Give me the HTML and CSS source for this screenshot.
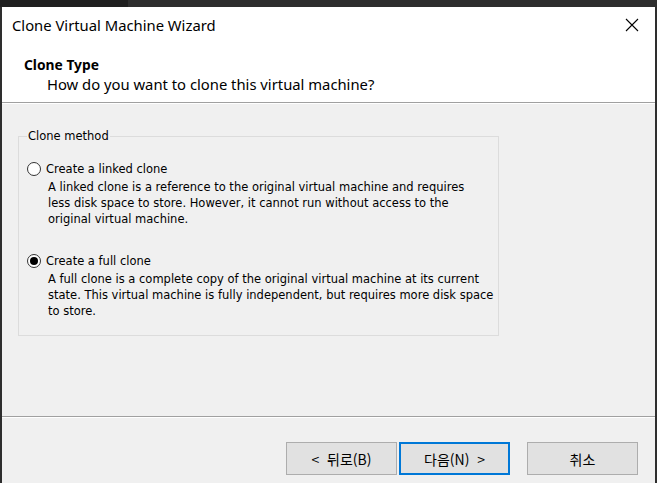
FILE: index.html
```html
<!DOCTYPE html>
<html lang="ko">
<head>
    <meta charset="UTF-8">
    <meta name="viewport" content="width=device-width, initial-scale=1.0">
    <title>Clone Virtual Machine Wizard</title>
    <link rel="stylesheet" href="styles.css">
</head>
<body>
    <div class="titlebar-strip">
        <div class="strip-dark"></div>
    </div>
    <div class="window">
        <div class="header">
            <div class="title-row">
                <span class="title">Clone Virtual Machine Wizard</span>
                <svg class="close" width="14" height="14" viewBox="0 0 14 14">
                    <path d="M1 1 L13 13 M13 1 L1 13" stroke="#000" stroke-width="1.1" fill="none"/>
                </svg>
            </div>
            <div class="page-title">Clone Type</div>
            <div class="page-subtitle">How do you want to clone this virtual machine?</div>
        </div>

        <div class="content">
            <fieldset class="group">
                <legend>Clone method</legend>
                <div class="option">
                    <div class="option-head">
                        <span class="radio"></span>
                        <span>Create a linked clone</span>
                    </div>
                    <p class="option-desc">A linked clone is a reference to the original virtual machine and requires<br>less disk space to store. However, it cannot run without access to the<br>original virtual machine.</p>
                </div>
                <div class="option">
                    <div class="option-head">
                        <span class="radio checked"></span>
                        <span>Create a full clone</span>
                    </div>
                    <p class="option-desc">A full clone is a complete copy of the original virtual machine at its current<br>state. This virtual machine is fully independent, but requires more disk space<br>to store.</p>
                </div>
            </fieldset>
        </div>

        <div class="footer">
            <button class="btn">&lt;&nbsp; 뒤로(B)</button>
            <button class="btn btn-default">다음(N)&nbsp; &gt;</button>
            <button class="btn btn-cancel">취소</button>
        </div>
    </div>
</body>
</html>
```

FILE: styles.css
```css
* {
    box-sizing: border-box;
}

html, body {
    margin: 0;
    padding: 0;
    height: 100%;
}

body {
    background: #2e2e2e;
    display: flex;
    flex-direction: column;
    overflow: hidden;
}

.titlebar-strip {
    height: 7px;
    flex: none;
}

.strip-dark {
    width: 128px;
    height: 7px;
    background: #1f1f1f;
}

.window {
    flex: 1;
    margin: 0 2px 0 2px;
    background: #f0f0f0;
    display: flex;
    flex-direction: column;
}

.header {
    background: #fff;
    height: 96px;
    border-bottom: 1px solid #a0a0a0;
    font-family: "Noto Sans", "Open Sans", sans-serif;
    color: #000;
}

.title-row {
    height: 36px;
    display: flex;
    align-items: center;
    justify-content: space-between;
    padding: 0 16px 0 10px;
}

.title {
    font-size: 14.8px;
    margin-top: -1px;
}

.close {
    margin-top: -1px;
}

.page-title {
    font-weight: bold;
    font-size: 13.8px;
    padding-left: 22px;
    line-height: 18px;
    margin-top: 13px;
}

.page-subtitle {
    font-size: 14.8px;
    padding-left: 45px;
    line-height: 20px;
    margin-top: 0;
}

.content {
    height: 314px;
    border-top: 1px solid #fff;
    border-bottom: 1px solid #a0a0a0;
    padding: 25px 0 0 16px;
}

.group {
    width: 481px;
    height: 207px;
    margin: 0;
    padding: 17px 0 0 8px;
    border: 1px solid #dcdcdc;
    font-family: "DejaVu Sans", sans-serif;
    font-size: 11.5px;
    color: #000;
}

.group legend {
    padding: 0 1px;
    margin-left: 0;
}

.option {
    margin-bottom: 25px;
}

.option-head {
    display: flex;
    align-items: center;
    gap: 5px;
    height: 18px;
}

.radio {
    width: 14px;
    height: 14px;
    border: 1px solid #333;
    border-radius: 50%;
    background: #fff;
    display: inline-block;
    position: relative;
}

.radio.checked::after {
    content: "";
    position: absolute;
    left: 2px;
    top: 2px;
    width: 8px;
    height: 8px;
    border-radius: 50%;
    background: #000;
}

.option-desc {
    margin: 1px 0 0 21px;
    line-height: 16px;
}

.footer {
    flex: 1;
    border-top: 1px solid #fff;
    display: flex;
    justify-content: flex-end;
    align-items: flex-start;
    padding: 24px 17px 0 0;
}

.btn {
    width: 111px;
    height: 33px;
    background: #e1e1e1;
    border: 1px solid #adadad;
    font-family: "Noto Sans CJK KR", "Noto Sans", sans-serif;
    font-size: 14px;
    color: #000;
    margin-left: 2px;
    padding: 0;
}

.btn-default {
    border: 2px solid #0078d7;
}

.btn-cancel {
    margin-left: 17px;
}
```
